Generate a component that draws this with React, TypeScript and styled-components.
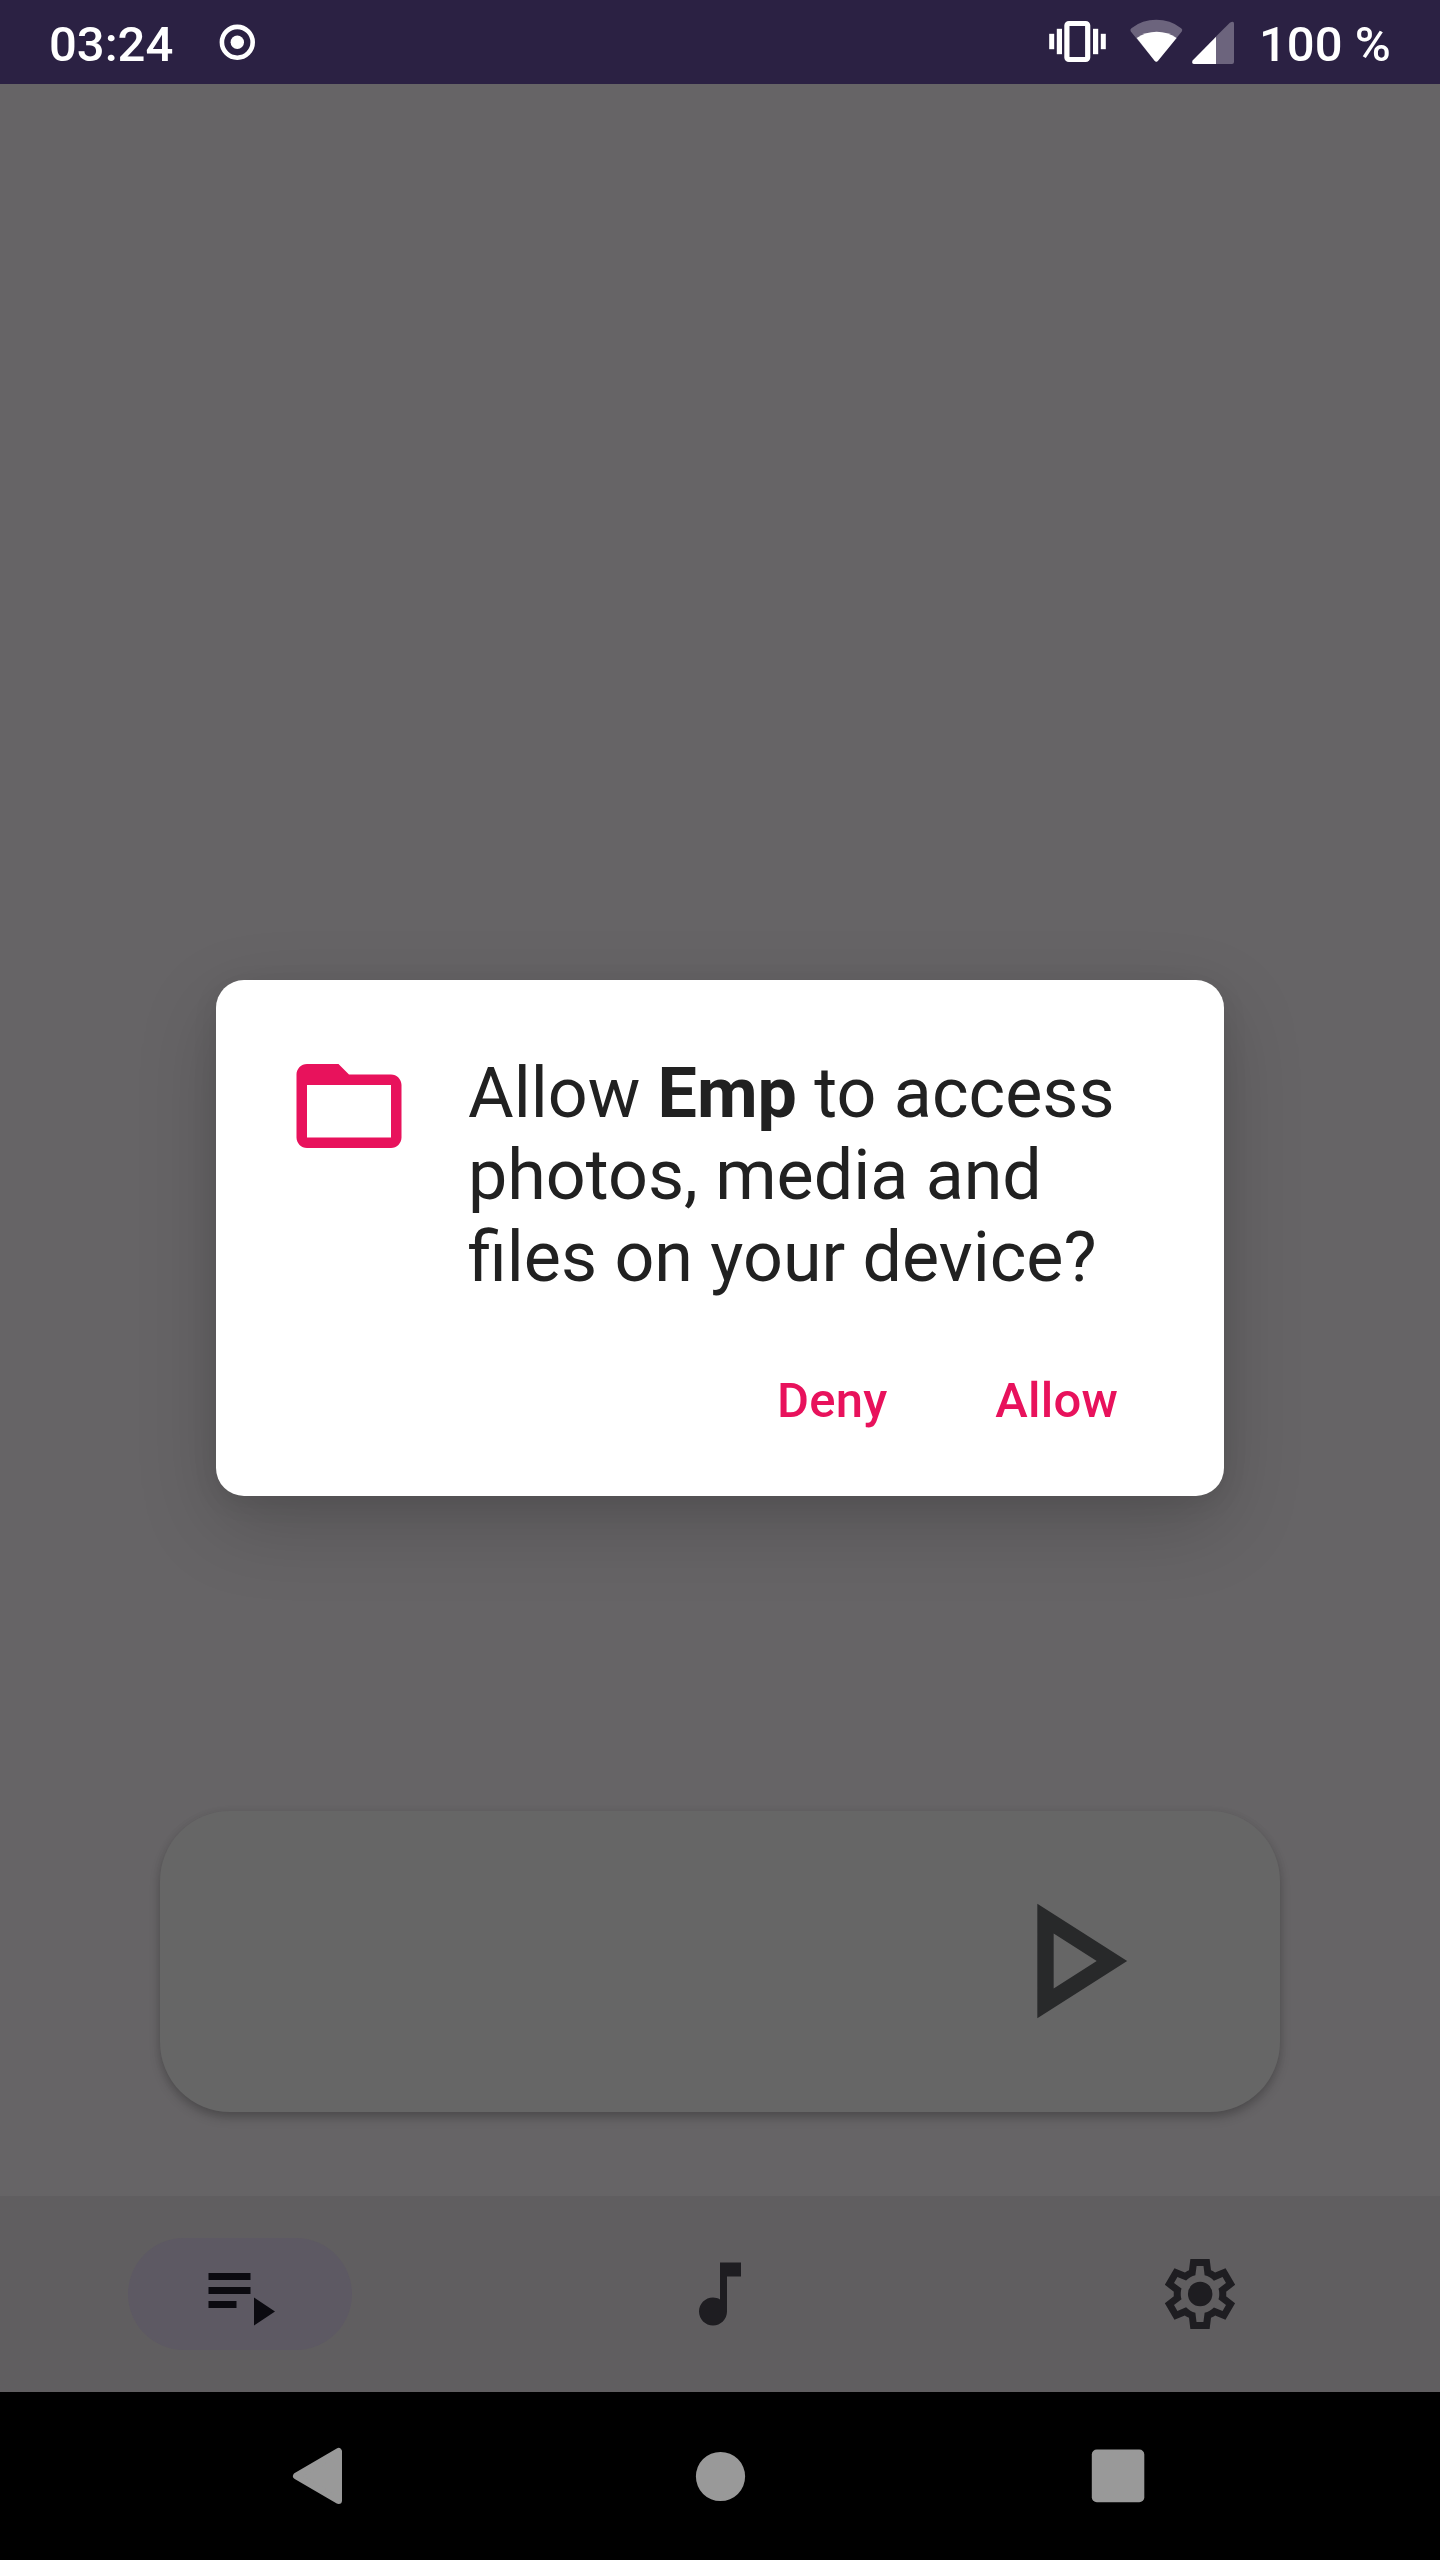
import React from "react";
import styled, { createGlobalStyle } from "styled-components";

const GlobalStyle = createGlobalStyle`
  * { box-sizing: border-box; }
  body { margin: 0; background: #000; }
  button { border: 0; background: none; padding: 0; font: inherit; }
  svg { display: block; flex: none; }
`;

const Screen = styled.div`
  position: relative;
  width: 1440px;
  height: 2560px;
  display: flex;
  flex-direction: column;
  overflow: hidden;
  background: #666466;
  font-family: Roboto, "Liberation Sans", sans-serif;
`;

const StatusBar = styled.header`
  height: 84px;
  flex: none;
  display: flex;
  align-items: center;
  justify-content: space-between;
  padding: 0 53px 0 49px;
  background: #2b2143;
  color: #fff;
  font-size: 49px;
  font-weight: 500;
  line-height: 57px;
`;

const StatusGroup = styled.div`
  display: flex;
  align-items: center;
  height: 84px;
`;

const StatusText = styled.span<{ $width: number }>`
  width: ${(p) => p.$width}px;
  padding-top: 4px;
  white-space: nowrap;
`;

const Content = styled.main`
  flex: 1;
  display: flex;
  flex-direction: column;
  justify-content: flex-end;
  padding: 0 160px 84px;
`;

const PlayerCard = styled.section`
  height: 301px;
  display: flex;
  align-items: center;
  justify-content: flex-end;
  padding: 0 112px 1px 0;
  border-radius: 70px;
  background: #666;
  box-shadow: 0 6px 12px -1px rgba(0, 0, 0, 0.24), 0 1px 8px rgba(0, 0, 0, 0.07);
`;

const BottomNav = styled.nav`
  height: 196px;
  flex: none;
  display: grid;
  grid-template-columns: repeat(3, 480px);
  align-items: center;
  justify-items: center;
  background: #605e60;
`;

const NavItem = styled.button<{ $active?: boolean }>`
  width: 224px;
  height: 112px;
  display: grid;
  place-items: center;
  border-radius: 56px;
  background: ${(p) => (p.$active ? "#5d5963" : "transparent")};
  color: ${(p) => (p.$active ? "#0b0a10" : "#1e1d21")};
`;

const NavCell = styled.div<{ $align: "start" | "center" | "end" }>`
  width: 480px;
  display: flex;
  justify-content: ${(p) => p.$align};
  padding: 0 128px;
`;

const SystemNav = styled.footer`
  height: 168px;
  flex: none;
  display: flex;
  align-items: center;
  justify-content: space-between;
  padding: 0 280px;
  background: #000;
  color: #999;
`;

const Overlay = styled.div`
  position: absolute;
  inset: 84px 0 168px;
  display: grid;
  place-items: center;
`;

const Dialog = styled.div`
  width: 1008px;
  height: 516px;
  display: flex;
  flex-direction: column;
  justify-content: space-between;
  padding: 63px 70px 33px;
  border-radius: 28px;
  background: #fff;
  box-shadow: 0 28px 80px rgba(0, 0, 0, 0.18), 0 6px 26px rgba(0, 0, 0, 0.08);
`;

const DialogBody = styled.div`
  display: flex;
  gap: 56px;
`;

const Message = styled.p`
  margin: 9px 0 0;
  color: #212121;
  font-size: 70px;
  line-height: 82px;
  white-space: nowrap;
`;

const Actions = styled.div`
  height: 126px;
  display: flex;
  align-items: center;
  justify-content: flex-end;
  gap: 108px;
  padding-right: 36px;
`;

const DialogButton = styled.button`
  color: #e8125c;
  font-size: 49px;
  font-weight: 500;
  line-height: 57px;
  letter-spacing: 0.2px;
`;

const RecordIcon = () => (
  <svg width="38" height="84" viewBox="218 0 38 84" fill="#fff">
    <circle cx="237.3" cy="42.3" r="15.4" fill="none" stroke="#fff" strokeWidth="4.6" />
    <circle cx="237.3" cy="42.3" r="6.7" />
  </svg>
);

const StatusIcons = () => (
  <svg width="211" height="84" viewBox="1048 0 211 84" fill="#fff">
    <rect x="1066.9" y="23.5" width="20.8" height="36" rx="2" fill="none" stroke="#fff" strokeWidth="5.2" />
    <rect x="1056.8" y="28.8" width="5.2" height="25.4" />
    <rect x="1049.2" y="33.8" width="5" height="15.4" />
    <rect x="1093" y="28.8" width="5.2" height="25.4" />
    <rect x="1100.8" y="33.8" width="5" height="15.4" />
    <path
      d="M1130.8 31.4q-1.2-1.8.6-3.2a40.5 40.5 0 0 1 49.8 0q1.9 1.4.6 3.2l-24 29.6q-1.5 1.6-3 0z"
      fill="#6c647d"
    />
    <path d="M1136.7 37.9a35 35 0 0 1 39.9 0l-18.8 23.1q-1.5 1.6-3 0z" />
    <path d="M1229.8 22.8q4.2-2.6 4.2.8v38.4q0 2-2 2h-16v-27.4z" fill="#6c647d" />
    <path d="M1216 36.8v27.2h-22q-2.8-.6-1.4-3.6z" />
  </svg>
);

const FolderIcon = () => (
  <svg width="126" height="126" viewBox="0 0 24 24" fill="#e8125c">
    <path d="M20 6h-8l-2-2H4c-1.1 0-2 .9-2 2v12c0 1.1.9 2 2 2h16c1.1 0 2-.9 2-2V8c0-1.1-.9-2-2-2zm0 12H4V8h16v10z" />
  </svg>
);

const PlayIcon = () => (
  <svg width="196" height="196" viewBox="0 0 24 24" fill="#28292a">
    <path d="M8 5v14l11-7zm2 3.64L15.27 12 10 15.36z" fillRule="evenodd" />
  </svg>
);

const PlaylistIcon = () => (
  <svg width="84" height="84" viewBox="0 0 24 24" fill="currentColor">
    <path d="M3 6h12v2H3zM3 10h12v2H3zM3 14h8v2H3zM16 13v8l6-4z" />
  </svg>
);

const NoteIcon = () => (
  <svg width="84" height="84" viewBox="0 0 24 24" fill="currentColor">
    <path d="M12 3v10.55c-.59-.34-1.27-.55-2-.55-2.21 0-4 1.79-4 4s1.79 4 4 4 4-1.79 4-4V7h4V3z" />
  </svg>
);

const SettingsIcon = () => (
  <svg width="84" height="84" viewBox="0 -960 960 960" fill="currentColor">
    <path
      fillRule="evenodd"
      d="m370-80-16-128q-13-5-24.5-12T307-235l-119 50L78-375l103-78q-1-7-1-13.5v-27q0-6.5 1-13.5L78-585l110-190 119 50q11-8 23-15t24-12l16-128h220l16 128q13 5 24.5 12t22.5 15l119-50 110 190-103 78q1 7 1 13.5v27q0 6.5-2 13.5l103 78-110 190-118-50q-11 8-23 15t-24 12L590-80H370Zm70-80h79l14-106q31-8 57.5-23.5T639-327l99 41 39-68-86-65q5-14 7-29.5t2-31.5q0-16-2-31.5t-7-29.5l86-65-39-68-99 42q-22-23-48.5-38.5T533-694l-13-106h-79l-14 106q-31 8-57.5 23.5T321-633l-99-41-39 68 86 64q-5 15-7 30t-2 32q0 16 2 31t7 30l-86 65 39 68 99-42q22 23 48.5 38.5T427-266l13 106Zm42-180q58 0 99-41t41-99q0-58-41-99t-99-41q-59 0-99.5 41T342-480q0 58 40.5 99t99.5 41Z"
    />
  </svg>
);

const BackIcon = () => (
  <svg width="76" height="84" viewBox="280 2434 76 84" fill="currentColor">
    <path
      d="M296.5 2476L338.5 2451.5V2500.5Z"
      stroke="currentColor"
      strokeWidth="7"
      strokeLinejoin="round"
    />
  </svg>
);

const HomeIcon = () => (
  <svg width="84" height="84" viewBox="678 2434 84 84" fill="currentColor">
    <circle cx="720.5" cy="2476.5" r="24.6" />
  </svg>
);

const RecentsIcon = () => (
  <svg width="76" height="84" viewBox="1084 2434 76 84" fill="currentColor">
    <rect x="1091.8" y="2449.5" width="52.5" height="52.7" rx="5" />
  </svg>
);

export default function App() {
  return (
    <>
      <GlobalStyle />
      <Screen>
        <StatusBar>
          <StatusGroup>
            <StatusText $width={169}>03:24</StatusText>
            <RecordIcon />
          </StatusGroup>
          <StatusGroup>
            <StatusIcons />
            <StatusText $width={128}>100 %</StatusText>
          </StatusGroup>
        </StatusBar>
        <Content>
          <PlayerCard>
            <PlayIcon />
          </PlayerCard>
        </Content>
        <BottomNav>
          <NavCell $align="start">
            <NavItem $active>
              <PlaylistIcon />
            </NavItem>
          </NavCell>
          <NavCell $align="center">
            <NavItem>
              <NoteIcon />
            </NavItem>
          </NavCell>
          <NavCell $align="end">
            <NavItem>
              <SettingsIcon />
            </NavItem>
          </NavCell>
        </BottomNav>
        <SystemNav>
          <BackIcon />
          <HomeIcon />
          <RecentsIcon />
        </SystemNav>
        <Overlay>
          <Dialog role="dialog">
            <DialogBody>
              <FolderIcon />
              <Message>
                Allow <b>Emp</b> to access
                <br />
                photos, media and
                <br />
                files on your device?
              </Message>
            </DialogBody>
            <Actions>
              <DialogButton>Deny</DialogButton>
              <DialogButton>Allow</DialogButton>
            </Actions>
          </Dialog>
        </Overlay>
      </Screen>
    </>
  );
}
